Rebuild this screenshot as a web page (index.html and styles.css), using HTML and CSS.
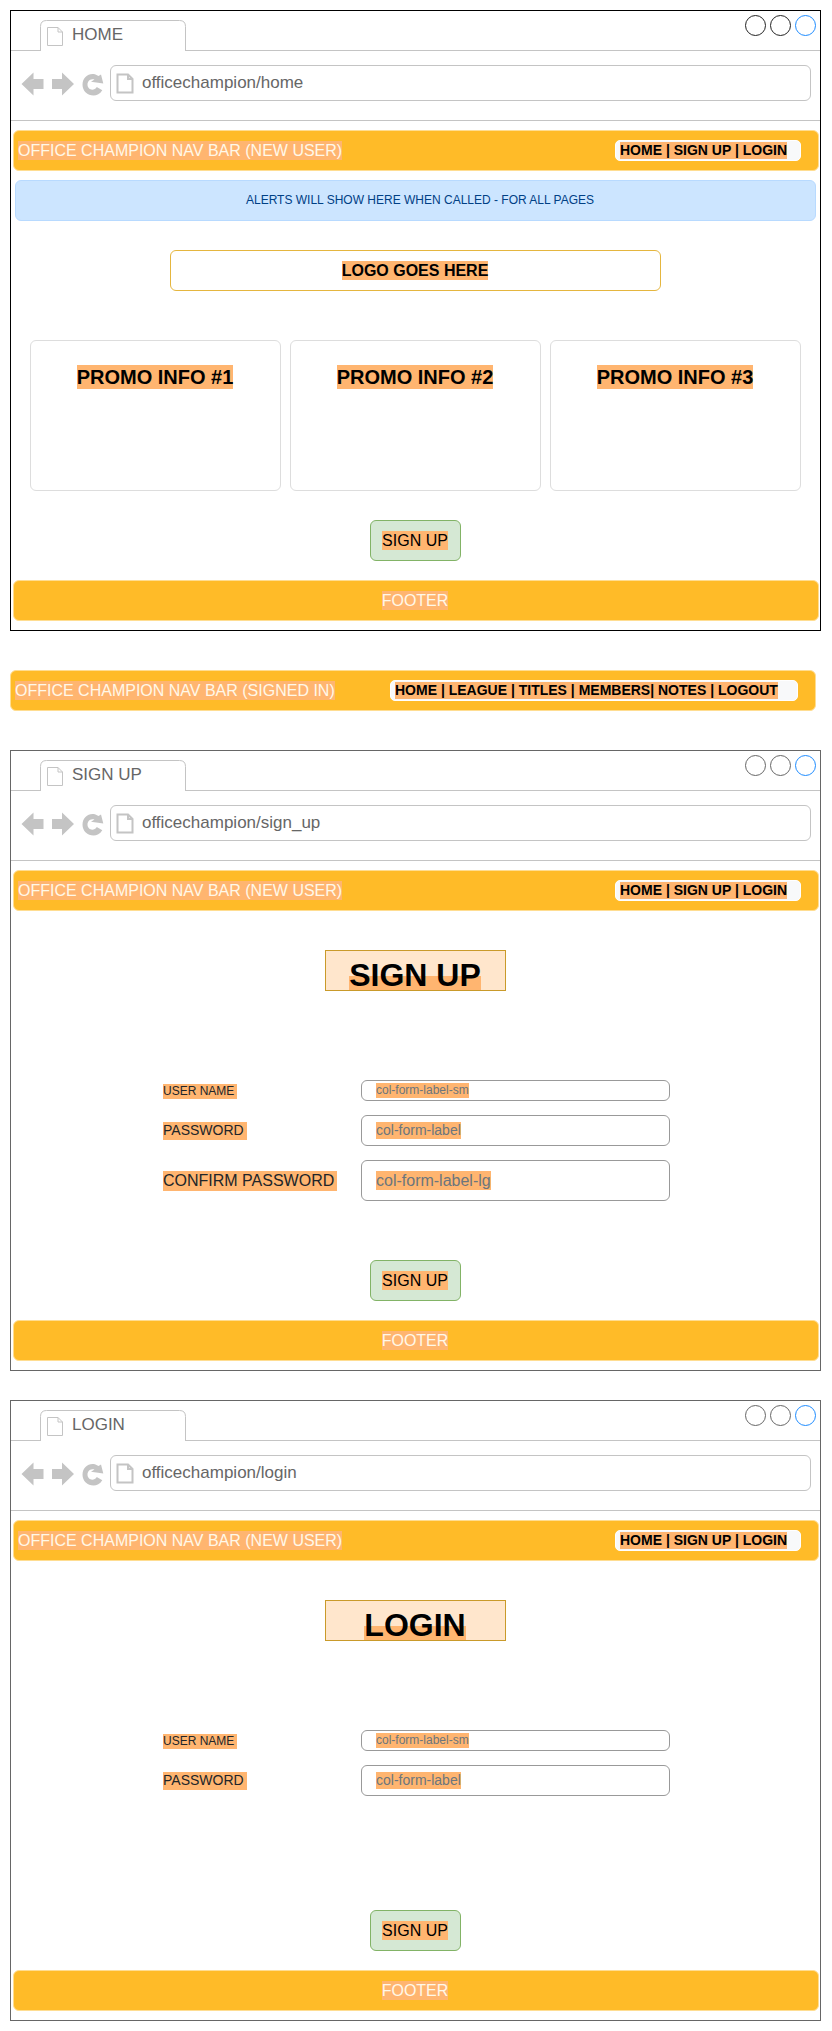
FILE: index.html
```html
<!DOCTYPE html>
<html lang="en">
<head>
<meta charset="utf-8">
<title>Office Champion wireframes</title>
<link rel="stylesheet" href="styles.css">
</head>
<body>
<svg class="defs" aria-hidden="true">
  <symbol id="tab" viewBox="0 0 146 32"><path d="M.5 32V6.500Q.5 .5 6.500 .5H139.500Q145.500 .5 145.500 6.500V32Z" fill="#fff" stroke="none"/><path d="M.5 31V6.500Q.5 .5 6.500 .5H139.500Q145.500 .5 145.500 6.500V31" fill="none" stroke="#c4c4c4"/><path d="M7.500 7.500H18L22.500 12V25.500H7.500ZM18 7.500V12H22.500" fill="none" stroke="#c4c4c4"/></symbol>
  <symbol id="tools" viewBox="0 0 84 24"><g fill="#c4c4c4"><path d="M.5 12 12.500 .5V7H22.500V17H12.500V23.500Z"/><path d="M53 12 41 .5V7H31V17H41V23.500Z"/><path d="M80 2.500 82.300 11.500 70 9.800 73.500 7.600C69 6 66.500 9.500 66.500 12.500C66.500 18 73 19.500 75.800 15L81.300 18.200C79 22 75.800 23.500 72.500 23.500C66.500 23.500 61.500 19 61.500 12.700C61.500 4 70.500-1 77.500 4.100Z"/></g></symbol>
  <symbol id="doc" viewBox="0 0 18 21"><path d="M1.500 1.500H12L16.500 6V19.500H1.500ZM12 1.500V6H16.500" fill="none" stroke="#c4c4c4" stroke-width="2"/></symbol>
</svg>

<section class="window home">
  <div class="tabs"><div class="tab"><svg class="tab-shape"><use href="#tab"/></svg><span class="tab-text">HOME</span></div><div class="dots"><i></i><i></i><i class="blue"></i></div></div>
  <div class="tools"><svg class="tool-icons"><use href="#tools"/></svg><div class="url"><svg class="doc"><use href="#doc"/></svg><span>officechampion/home</span></div></div>
  <div class="bar nav"><span class="hl">OFFICE CHAMPION NAV BAR (NEW USER)</span><div class="links"><b class="hl h14">HOME | SIGN UP | LOGIN</b></div></div>
  <div class="alert">ALERTS WILL SHOW HERE WHEN CALLED - FOR ALL PAGES</div>
  <div class="logo"><b class="hl">LOGO GOES HERE</b></div>
  <div class="promos"><div class="promo"><b class="hl h20">PROMO INFO #1</b></div><div class="promo"><b class="hl h20">PROMO INFO #2</b></div><div class="promo"><b class="hl h20">PROMO INFO #3</b></div></div>
  <div class="button"><span class="hl">SIGN UP</span></div>
  <div class="bar footer"><span class="hl">FOOTER</span></div>
</section>

<div class="bar nav signed"><span class="hl">OFFICE CHAMPION NAV BAR (SIGNED IN)</span><div class="links"><b class="hl h14">HOME | LEAGUE | TITLES | MEMBERS| NOTES | LOGOUT</b></div></div>

<section class="window">
  <div class="tabs"><div class="tab"><svg class="tab-shape"><use href="#tab"/></svg><span class="tab-text">SIGN UP</span></div><div class="dots"><i></i><i></i><i class="blue"></i></div></div>
  <div class="tools"><svg class="tool-icons"><use href="#tools"/></svg><div class="url"><svg class="doc"><use href="#doc"/></svg><span>officechampion/sign_up</span></div></div>
  <div class="bar nav"><span class="hl">OFFICE CHAMPION NAV BAR (NEW USER)</span><div class="links"><b class="hl h14">HOME | SIGN UP | LOGIN</b></div></div>
  <div class="title"><b>SIGN UP</b></div>
  <div class="form">
    <div class="row sm"><label class="hl">USER NAME</label><div class="input"><span class="hl">col-form-label-sm</span></div></div>
    <div class="row md"><label class="hl">PASSWORD</label><div class="input"><span class="hl">col-form-label</span></div></div>
    <div class="row lg"><label class="hl">CONFIRM PASSWORD</label><div class="input"><span class="hl">col-form-label-lg</span></div></div>
  </div>
  <div class="button"><span class="hl">SIGN UP</span></div>
  <div class="bar footer"><span class="hl">FOOTER</span></div>
</section>

<section class="window login">
  <div class="tabs"><div class="tab"><svg class="tab-shape"><use href="#tab"/></svg><span class="tab-text">LOGIN</span></div><div class="dots"><i></i><i></i><i class="blue"></i></div></div>
  <div class="tools"><svg class="tool-icons"><use href="#tools"/></svg><div class="url"><svg class="doc"><use href="#doc"/></svg><span>officechampion/login</span></div></div>
  <div class="bar nav"><span class="hl">OFFICE CHAMPION NAV BAR (NEW USER)</span><div class="links"><b class="hl h14">HOME | SIGN UP | LOGIN</b></div></div>
  <div class="title"><b>LOGIN</b></div>
  <div class="form">
    <div class="row sm"><label class="hl">USER NAME</label><div class="input"><span class="hl">col-form-label-sm</span></div></div>
    <div class="row md"><label class="hl">PASSWORD</label><div class="input"><span class="hl">col-form-label</span></div></div>
  </div>
  <div class="button"><span class="hl">SIGN UP</span></div>
  <div class="bar footer"><span class="hl">FOOTER</span></div>
</section>
</body>
</html>
```
FILE: styles.css
```css
* { box-sizing: border-box; }
body { margin: 0; padding: 10px 0 0 10px; height: 2031px; background: #fff; font: 16px/19px "Liberation Sans", Arial, sans-serif; color: #000; white-space: nowrap; }
.defs { display: none; }
svg { display: block; }

.window { display: flex; flex-direction: column; width: 811px; height: 621px; border: 1px solid #666; }
.home { border-color: #000; }
.login { margin-top: 29px; }

/* browser chrome */
.tabs { display: flex; justify-content: space-between; flex: none; height: 40px; padding: 9px 4px 0 29px; border-bottom: 1px solid #c4c4c4; }
.tab { display: grid; height: 32px; margin-bottom: -1px; }
.tab-shape { grid-area: 1 / 1; width: 146px; height: 32px; }
.tab-text { grid-area: 1 / 1; padding: 5px 0 0 32px; font-size: 17px; line-height: 19px; color: #666; }
.dots { display: flex; gap: 4px; margin-top: -5px; }
.dots i { width: 21px; height: 21px; border: 1px solid #666; border-radius: 50%; }
.home .dots i { border-color: #222; }
.window .dots .blue { border-color: #1e8cff; }
.tools { display: flex; flex: none; height: 70px; padding: 14px 9px 0 10px; border-bottom: 1px solid #c4c4c4; }
.tool-icons { width: 84px; height: 24px; margin-top: 7px; }
.url { display: flex; flex: 1; height: 36px; margin-left: 5px; padding-left: 5px; border: 1px solid #c4c4c4; border-radius: 6px; font-size: 17px; line-height: 33px; color: #666; }
.doc { width: 18px; height: 21px; margin: 7px 8px 0 0; }

/* highlighted text */
.hl { height: 19px; line-height: 19px; background: #ffb570; }
.h14 { height: 17px; font-size: 14px; line-height: 17px; }
.h20 { height: 24px; font-size: 20px; line-height: 24px; }

.bar { display: flex; flex: none; width: 806px; height: 41px; border: 1px solid #ffdd91; border-radius: 6px; background: #ffbb28; color: #fff8e8; }
.window > .bar { margin-left: 2px; }
.nav { justify-content: space-between; align-items: center; margin-top: 9px; padding: 0 17px 0 4px; }
.signed { margin: 39px 0; }
.links { display: flex; align-items: center; width: 186px; height: 21px; padding-left: 4px; border: 1px solid #fff; border-radius: 5px; background: #f8f9fa; color: #000; }
.signed .links { width: 408px; }
.footer { justify-content: center; align-items: center; margin-top: auto; margin-bottom: 9px; padding-right: 2px; }

.alert { height: 41px; width: 801px; margin: 9px 0 0 4px; padding-left: 9px; border: 1px solid #b8daff; border-radius: 6px; background: #cce5ff; color: #004085; font-size: 12px; line-height: 38px; text-align: center; }
.logo { display: flex; justify-content: center; align-items: center; width: 491px; height: 41px; margin: 29px 0 0 159px; padding-right: 1px; border: 1px solid #e5b63f; border-radius: 6px; }
.promos { display: grid; grid-template-columns: repeat(3, 251px); gap: 9px; margin: 49px 0 0 19px; }
.promo { display: flex; justify-content: center; height: 151px; padding: 24px 1px 0 0; border: 1px solid #ddd; border-radius: 6px; }
.button { display: flex; justify-content: center; align-items: center; flex: none; width: 91px; height: 41px; margin: auto 0 0 359px; padding-right: 1px; border: 1px solid #82b366; border-radius: 6px; background: #d5e8d4; }
.button + .footer { margin-top: 19px; }

/* forms */
.title { width: 181px; height: 41px; margin: 39px 0 0 314px; padding-right: 1px; border: 1px solid #c99a2a; background: #ffe6cc; font-size: 32px; line-height: 49px; text-align: center; }
.title b { display: inline-block; height: 39px; background: linear-gradient(transparent 25px, #ffb570 25px); }
.form { display: flex; flex-direction: column; gap: 14px; margin: 89px 0 0 152px; }
.row { display: flex; justify-content: space-between; width: 507px; }
.input { width: 309px; padding-left: 14px; border: 1px solid #999; border-radius: 6px; color: #6c757d; }
.input .hl { display: block; width: fit-content; }
label { color: #212529; }
.sm { height: 21px; font-size: 12px; }
.sm .hl { height: 15px; line-height: 14px; margin-top: 2px; }
.sm label.hl { width: 74px; margin-top: 4px; }
.md { height: 31px; font-size: 14px; }
.md .hl { height: 17px; line-height: 17px; margin-top: 6px; }
.md label.hl { width: 84px; height: 18px; margin-top: 7px; }
.lg { height: 41px; }
.lg .hl { margin-top: 10px; }
.lg label.hl { width: 174px; height: 20px; margin-top: 11px; }
```
